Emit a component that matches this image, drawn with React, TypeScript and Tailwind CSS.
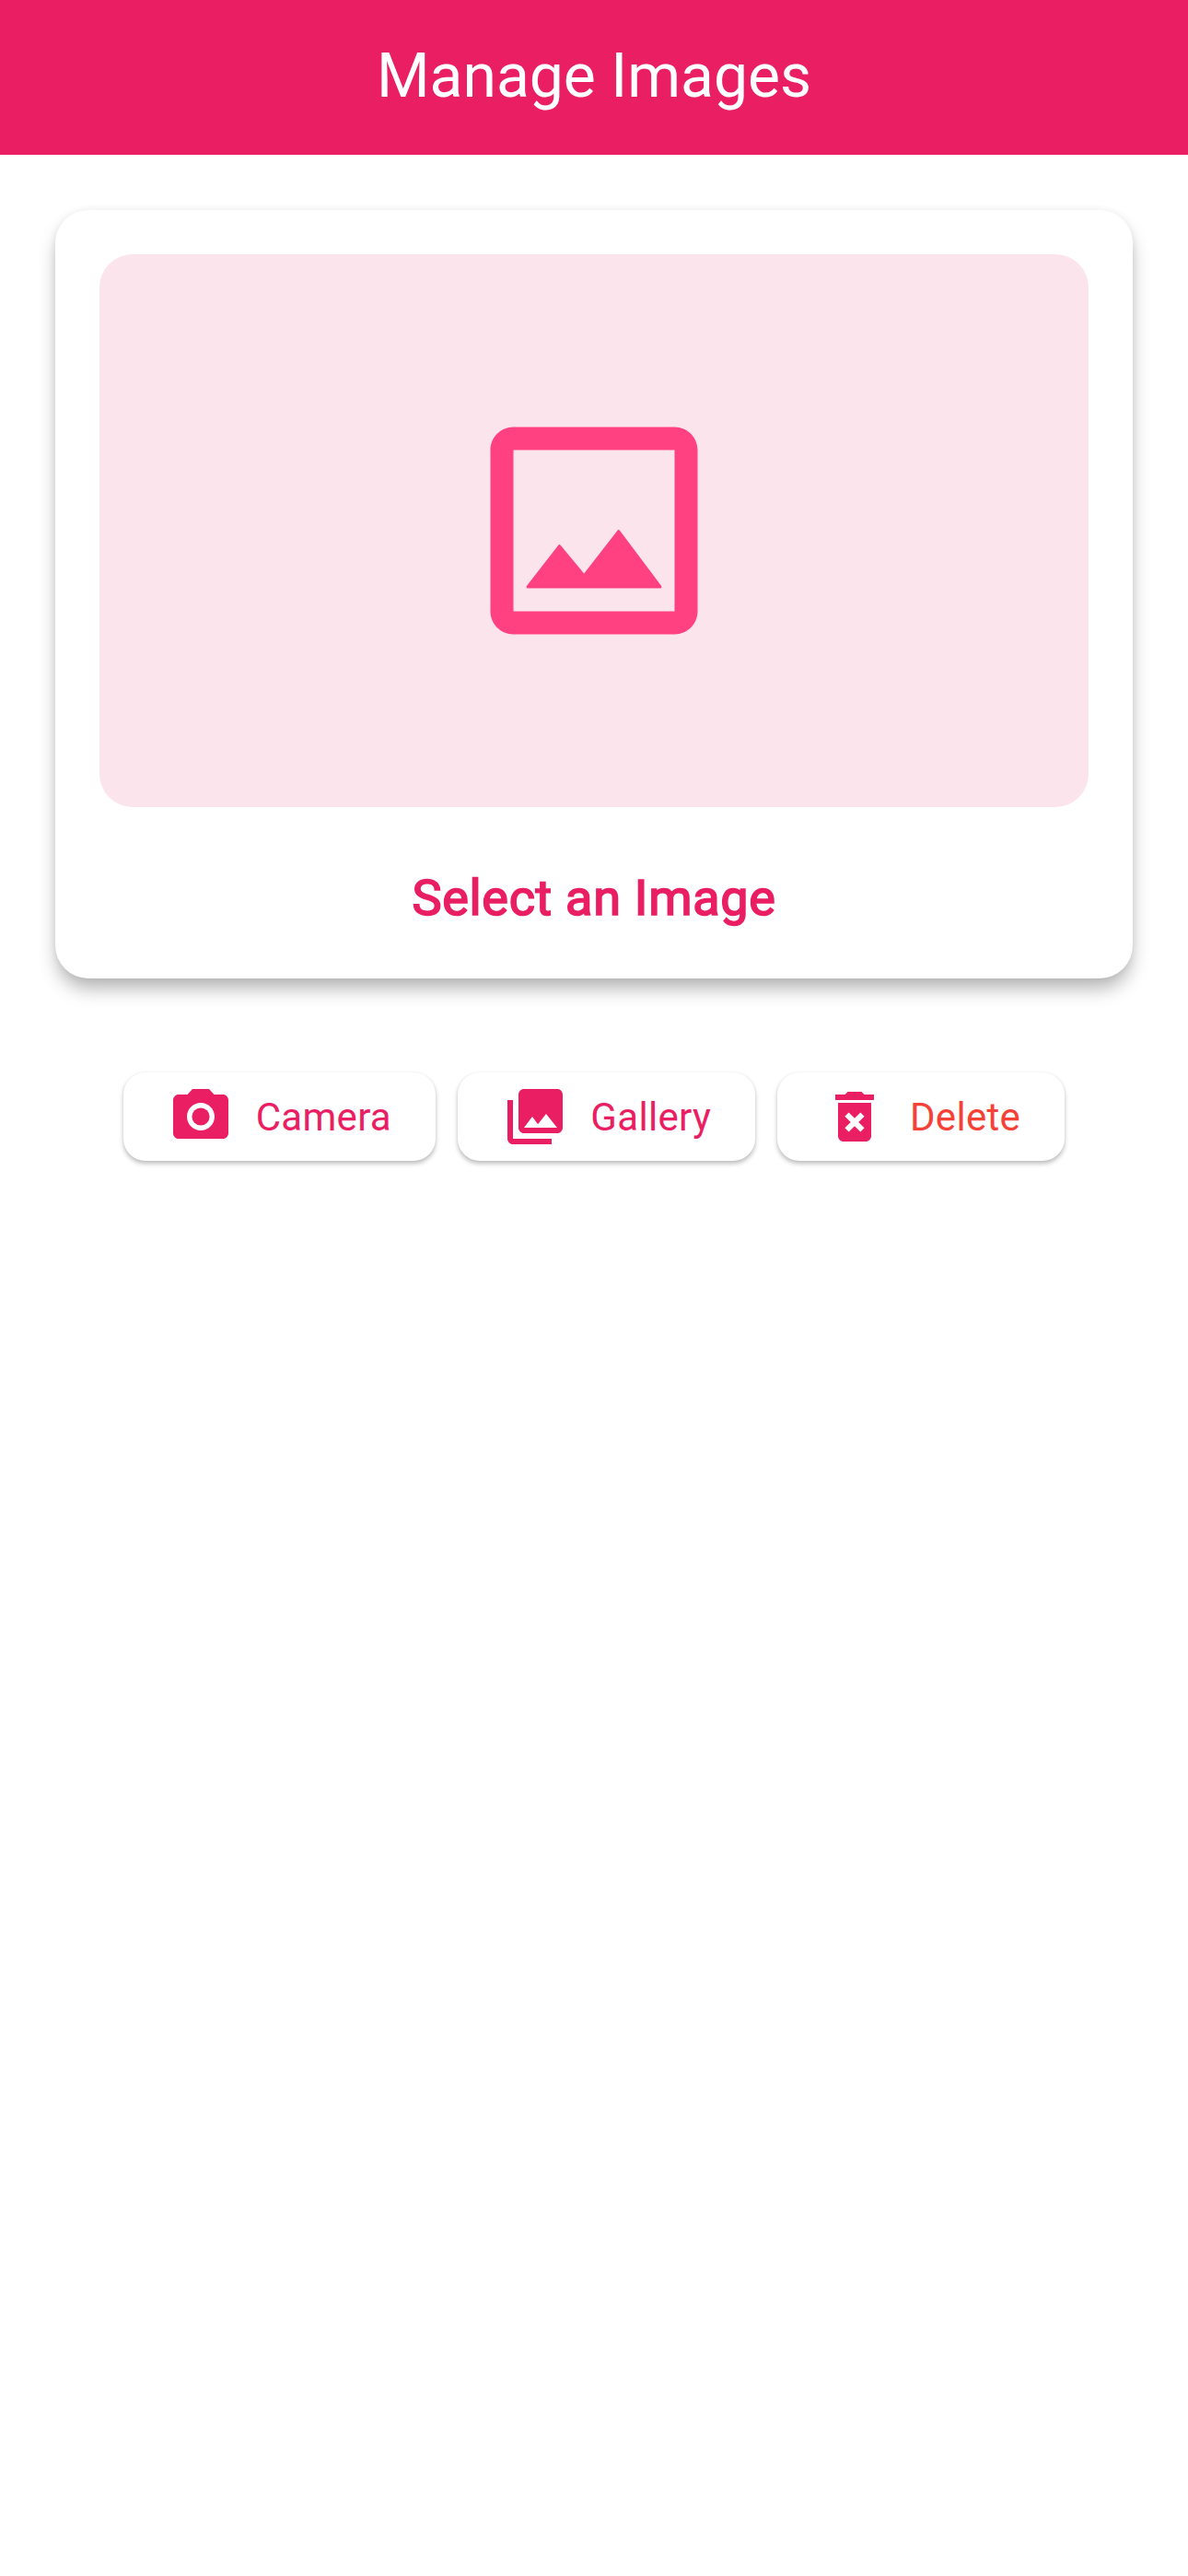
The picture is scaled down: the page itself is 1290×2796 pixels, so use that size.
import type { ReactNode } from "react";

function Icon({ className, children }: { className: string; children: ReactNode }) {
  return (
    <svg viewBox="0 0 24 24" fill="currentColor" className={className} aria-hidden="true">
      {children}
    </svg>
  );
}

function ActionButton({ label, width, color, children }: { label: string; width: string; color: string; children: ReactNode }) {
  return (
    <button
      className={`flex h-24 items-center gap-6 rounded-3xl bg-white pl-12 shadow-[0_3px_5px_-0.5px_rgba(0,0,0,0.26),0_0_2px_rgba(0,0,0,0.06)] ${width}`}
    >
      <Icon className="size-[72px] shrink-0 text-[#e91e63]">{children}</Icon>
      <span className={`whitespace-nowrap pt-0.5 text-[42px] leading-none tracking-[0.3px] ${color}`}>{label}</span>
    </button>
  );
}

export default function App() {
  return (
    <div className="flex min-h-[2796px] w-[1290px] flex-col items-center bg-white font-['Roboto',sans-serif]">
      <header className="flex h-[168px] w-full items-center justify-center bg-[#e91e63] pb-[3px]">
        <h1 className="text-[66px] leading-none font-normal text-white">Manage Images</h1>
      </header>

      <main className="flex w-full flex-col items-center px-[60px] pt-[60px]">
        <section className="flex h-[834px] w-full flex-col rounded-[36px] bg-white p-12 shadow-[0_13px_20px_-2px_rgba(0,0,0,0.29),0_0_8px_rgba(0,0,0,0.06)]">
          <div className="flex h-[600px] items-center justify-center rounded-[36px] bg-[#fce4ec]">
            <Icon className="size-[300px] text-[#ff4081]">
              <path d="M19 5v14H5V5h14m0-2H5c-1.1 0-2 .9-2 2v14c0 1.1.9 2 2 2h14c1.1 0 2-.9 2-2V5c0-1.1-.9-2-2-2z" />
              <path
                d="M6.245 16.88L9 13.33l2.14 2.59 3-3.87 3.615 4.83z"
                stroke="currentColor"
                strokeWidth="0.24"
                strokeLinejoin="round"
              />
            </Icon>
          </div>
          <p className="mt-[72px] text-center text-[54px] leading-none tracking-[0.7px] text-[#e91e63] [-webkit-text-stroke:1.7px_#e91e63]">
            Select an Image
          </p>
        </section>

        <div className="mt-[102px] flex gap-6">
          <ActionButton label="Camera" width="w-[339.67px]" color="text-[#e91e63]">
            <circle cx="12" cy="12" r="3.2" />
            <path d="M9 2L7.17 4H4c-1.1 0-2 .9-2 2v12c0 1.1.9 2 2 2h16c1.1 0 2-.9 2-2V6c0-1.1-.9-2-2-2h-3.17L15 2H9zm3 15c-2.76 0-5-2.24-5-5s2.24-5 5-5 5 2.24 5 5-2.24 5-5 5z" />
          </ActionButton>
          <ActionButton label="Gallery" width="w-[322.67px]" color="text-[#e91e63]">
            <path d="M22 16V4c0-1.1-.9-2-2-2H8c-1.1 0-2 .9-2 2v12c0 1.1.9 2 2 2h12c1.1 0 2-.9 2-2zm-11-4l2.03 2.71L16 11l4 5H8l3-4zM2 6v14c0 1.1.9 2 2 2h14v-2H4V6H2z" />
          </ActionButton>
          <ActionButton label="Delete" width="w-[312.33px]" color="text-[#f44336]">
            <path d="M6 19c0 1.1.9 2 2 2h8c1.1 0 2-.9 2-2V7H6v12zm2.46-7.12l1.41-1.41L12 12.59l2.12-2.12 1.41 1.41L13.41 14l2.12 2.12-1.41 1.41L12 15.41l-2.12 2.12-1.41-1.41L10.59 14l-2.13-2.12zM15.5 4l-1-1h-5l-1 1H5v2h14V4z" />
          </ActionButton>
        </div>
      </main>
    </div>
  );
}
